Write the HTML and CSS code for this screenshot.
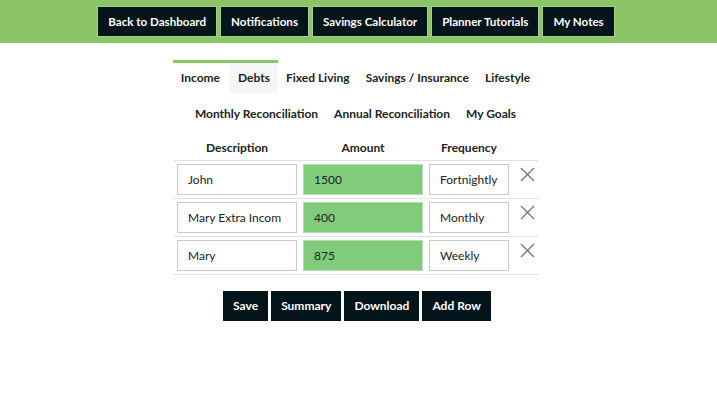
FILE: index.html
```html
<!DOCTYPE html>
<html>
<head>
<meta charset="utf-8">
<link rel="stylesheet" href="styles.css">
</head>
<body>
<header class="topbar">
  <nav class="topnav">
    <a class="navbtn">Back to Dashboard</a>
    <a class="navbtn">Notifications</a>
    <a class="navbtn">Savings Calculator</a>
    <a class="navbtn">Planner Tutorials</a>
    <a class="navbtn">My Notes</a>
  </nav>
</header>
<main class="content">
  <div class="tabs">
    <div class="tabrow">
      <span class="tab active">Income</span>
      <span class="tab hover">Debts</span>
      <span class="tab">Fixed Living</span>
      <span class="tab">Savings / Insurance</span>
      <span class="tab">Lifestyle</span>
    </div>
    <div class="tabrow">
      <span class="tab">Monthly Reconciliation</span>
      <span class="tab">Annual Reconciliation</span>
      <span class="tab">My Goals</span>
    </div>
  </div>
  <table class="grid">
    <thead>
      <tr><th>Description</th><th>Amount</th><th>Frequency</th><th></th></tr>
    </thead>
    <tbody>
      <tr>
        <td><div class="field desc">John</div></td>
        <td><div class="field amt">1500</div></td>
        <td><div class="field freq">Fortnightly</div></td>
        <td class="xcell"><svg class="x" viewBox="0 0 15 15"><path d="M1 1L14 14M14 1L1 14"/></svg></td>
      </tr>
      <tr>
        <td><div class="field desc">Mary Extra Incom</div></td>
        <td><div class="field amt">400</div></td>
        <td><div class="field freq">Monthly</div></td>
        <td class="xcell"><svg class="x" viewBox="0 0 15 15"><path d="M1 1L14 14M14 1L1 14"/></svg></td>
      </tr>
      <tr>
        <td><div class="field desc">Mary</div></td>
        <td><div class="field amt">875</div></td>
        <td><div class="field freq">Weekly</div></td>
        <td class="xcell"><svg class="x" viewBox="0 0 15 15"><path d="M1 1L14 14M14 1L1 14"/></svg></td>
      </tr>
    </tbody>
  </table>
  <div class="actions">
    <a class="btn">Save</a>
    <a class="btn">Summary</a>
    <a class="btn">Download</a>
    <a class="btn">Add Row</a>
  </div>
</main>
</body>
</html>
```
FILE: styles.css
```css
html, body {
  margin: 0;
  padding: 0;
  background: #ffffff;
  font-family: Lato, "Open Sans", sans-serif;
  color: #222;
}
.topbar {
  background: #8cc565;
  height: 43px;
  display: flex;
  justify-content: center;
}
.topnav {
  display: flex;
  gap: 3px;
  padding-top: 6px;
  margin-right: 5px;
}
.navbtn {
  background: #03141a;
  color: #fff;
  font-size: 11.6px;
  font-weight: 700;
  height: 31px;
  line-height: 29px;
  padding: 0 10px;
  border: 1px solid #a7cf8c;
  box-sizing: border-box;
}
.content {
  display: flex;
  flex-direction: column;
  align-items: center;
}
.tabs {
  margin-top: 17px;
  display: flex;
  flex-direction: column;
  align-items: center;
  margin-right: 6px;
}
.tabrow {
  display: flex;
  height: 36px;
}
.tab {
  font-size: 12px;
  font-weight: 700;
  padding: 0 8px;
  height: 30px;
  line-height: 30px;
  border-top: 3px solid transparent;
  color: #222;
}
.tab.hover {
  background: #f4f6f8;
  margin-left: 2px;
}
.tabrow:first-child .tab.active,
.tabrow:first-child .tab.hover {
  border-top-color: #8cc565;
}
.tabrow:first-child .tab.active { margin-right: -2px; padding-right: 10px; }
.grid {
  border-collapse: collapse;
  margin-top: 2px;
  width: 364px;
  margin-right: 5px;
}
.grid th {
  font-size: 12px;
  font-weight: 700;
  height: 26px;
  padding: 0 0 0 0;
  vertical-align: middle;
}
.grid td {
  border-top: 1px solid #dfe3e6;
  padding: 3px;
  height: 31px;
}
.grid tbody tr:last-child td { border-bottom: 1px solid #dfe3e6; }
.field {
  height: 31px;
  box-sizing: border-box;
  border: 1px solid #c9c9c9;
  font-size: 12px;
  line-height: 29px;
  padding: 0 10px;
  white-space: nowrap;
  overflow: hidden;
  color: #222;
}
.desc { width: 120px; }
.amt { width: 120px; background: #80cc7b; border-color: #b8dcb2; }
.freq { width: 80px; }
.xcell { vertical-align: top; width: 24px; }
.x {
  width: 15px;
  height: 15px;
  display: block;
  margin: 3px 0 0 5px;
  stroke: #777;
  stroke-width: 1.4;
  fill: none;
}
.actions {
  display: flex;
  gap: 3px;
  margin-top: 16px;
  margin-right: 3px;
}
.btn {
  background: #03141a;
  color: #fff;
  font-size: 12px;
  font-weight: 700;
  height: 30px;
  line-height: 30px;
  padding: 0 10px;
}
```
